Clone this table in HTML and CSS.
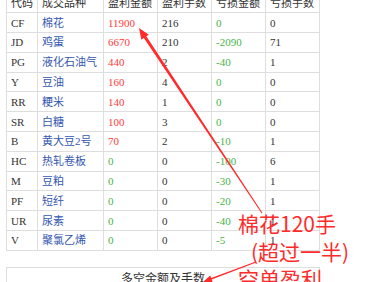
FILE: index.html
```html
<!DOCTYPE html>
<html lang="zh">
<head>
<meta charset="utf-8">
<link rel="stylesheet" href="styles.css">
</head>
<body>
<div class="page">
  <table class="trades">
    <colgroup>
      <col class="c-code"><col class="c-name"><col class="c-num"><col class="c-num"><col class="c-num"><col class="c-num">
    </colgroup>
    <thead>
      <tr><th>代码</th><th>成交品种</th><th>盈利金额</th><th>盈利手数</th><th>亏损金额</th><th>亏损手数</th></tr>
    </thead>
    <tbody>
      <tr><td>CF</td><td class="name">棉花</td><td class="up">11900</td><td>216</td><td class="down">0</td><td>0</td></tr>
      <tr><td>JD</td><td class="name">鸡蛋</td><td class="up">6670</td><td>210</td><td class="down">-2090</td><td>71</td></tr>
      <tr><td>PG</td><td class="name">液化石油气</td><td class="up">440</td><td>2</td><td class="down">-40</td><td>1</td></tr>
      <tr><td>Y</td><td class="name">豆油</td><td class="up">160</td><td>4</td><td class="down">0</td><td>0</td></tr>
      <tr><td>RR</td><td class="name">粳米</td><td class="up">140</td><td>1</td><td class="down">0</td><td>0</td></tr>
      <tr><td>SR</td><td class="name">白糖</td><td class="up">100</td><td>3</td><td class="down">0</td><td>0</td></tr>
      <tr><td>B</td><td class="name">黄大豆2号</td><td class="up">70</td><td>2</td><td class="down">-10</td><td>1</td></tr>
      <tr><td>HC</td><td class="name">热轧卷板</td><td class="down">0</td><td>0</td><td class="down">-100</td><td>6</td></tr>
      <tr><td>M</td><td class="name">豆粕</td><td class="down">0</td><td>0</td><td class="down">-30</td><td>1</td></tr>
      <tr><td>PF</td><td class="name">短纤</td><td class="down">0</td><td>0</td><td class="down">-20</td><td>1</td></tr>
      <tr><td>UR</td><td class="name">尿素</td><td class="down">0</td><td>0</td><td class="down">-40</td><td>1</td></tr>
      <tr><td>V</td><td class="name">聚氯乙烯</td><td class="down">0</td><td>0</td><td class="down">-5</td><td>1</td></tr>
    </tbody>
  </table>
  <div class="summary">
    <div class="summary-head">多空金额及手数</div>
  </div>
</div>

<svg class="arrows" width="380" height="282" viewBox="0 0 380 282">
  <polygon fill="#ff2b2b" points="139,28 148.85,34.71 146.35,36.37 262.42,212.72 261.58,213.28 143.85,38.03 141.35,39.69"/>
  <polygon fill="#ff2b2b" points="203,282 210.19,275.54 211.15,278.07 255.82,261.53 256.18,262.47 211.71,279.57 212.67,282.1"/>
</svg>

<div class="note">
  <div class="note-line">棉花120手</div>
  <div class="note-line indent">(超过一半)</div>
  <div class="note-line">空单盈利</div>
</div>
</body>
</html>
```
FILE: styles.css
```css
html, body {
  margin: 0;
  padding: 0;
  background: #fff;
  overflow: hidden;
}

body {
  width: 380px;
  height: 282px;
  position: relative;
  font-family: "Liberation Serif", "Noto Sans CJK SC", serif;
  font-size: 11px;
  color: #333;
}

.page {
  padding-left: 6px;
  margin-top: -7px;
  width: 314px;
}

.trades {
  border-collapse: collapse;
  table-layout: fixed;
  width: 314px;
}

.c-code { width: 31px; }
.c-name { width: 66px; }
.c-num { width: 54px; }

.trades th,
.trades td {
  border: 1px solid #dedede;
  height: 19.8px;
  padding: 0 0 0 4px;
  text-align: left;
  font-weight: normal;
  white-space: nowrap;
  line-height: 14px;
  box-sizing: border-box;
}

.trades th {
  border-top: none;
}

.trades td.name { color: #3557b0; }
.trades td.up { color: #ff3b3b; }
.trades td.down { color: #47b54a; }

.summary {
  margin-top: 16px;
  border: 1px solid #dedede;
  height: 40px;
}

.summary-head {
  text-align: center;
  font-size: 12px;
  padding-top: 4px;
  line-height: 14px;
}

.arrows {
  position: absolute;
  left: 0;
  top: 0;
}

.note {
  position: absolute;
  left: 238px;
  top: 210px;
  font-family: "Noto Sans CJK SC", "Noto Sans", sans-serif;
  font-size: 21px;
  line-height: 27.5px;
  color: #ff2b2b;
  white-space: nowrap;
}

.note-line.indent {
  margin-left: 13px;
}
```
